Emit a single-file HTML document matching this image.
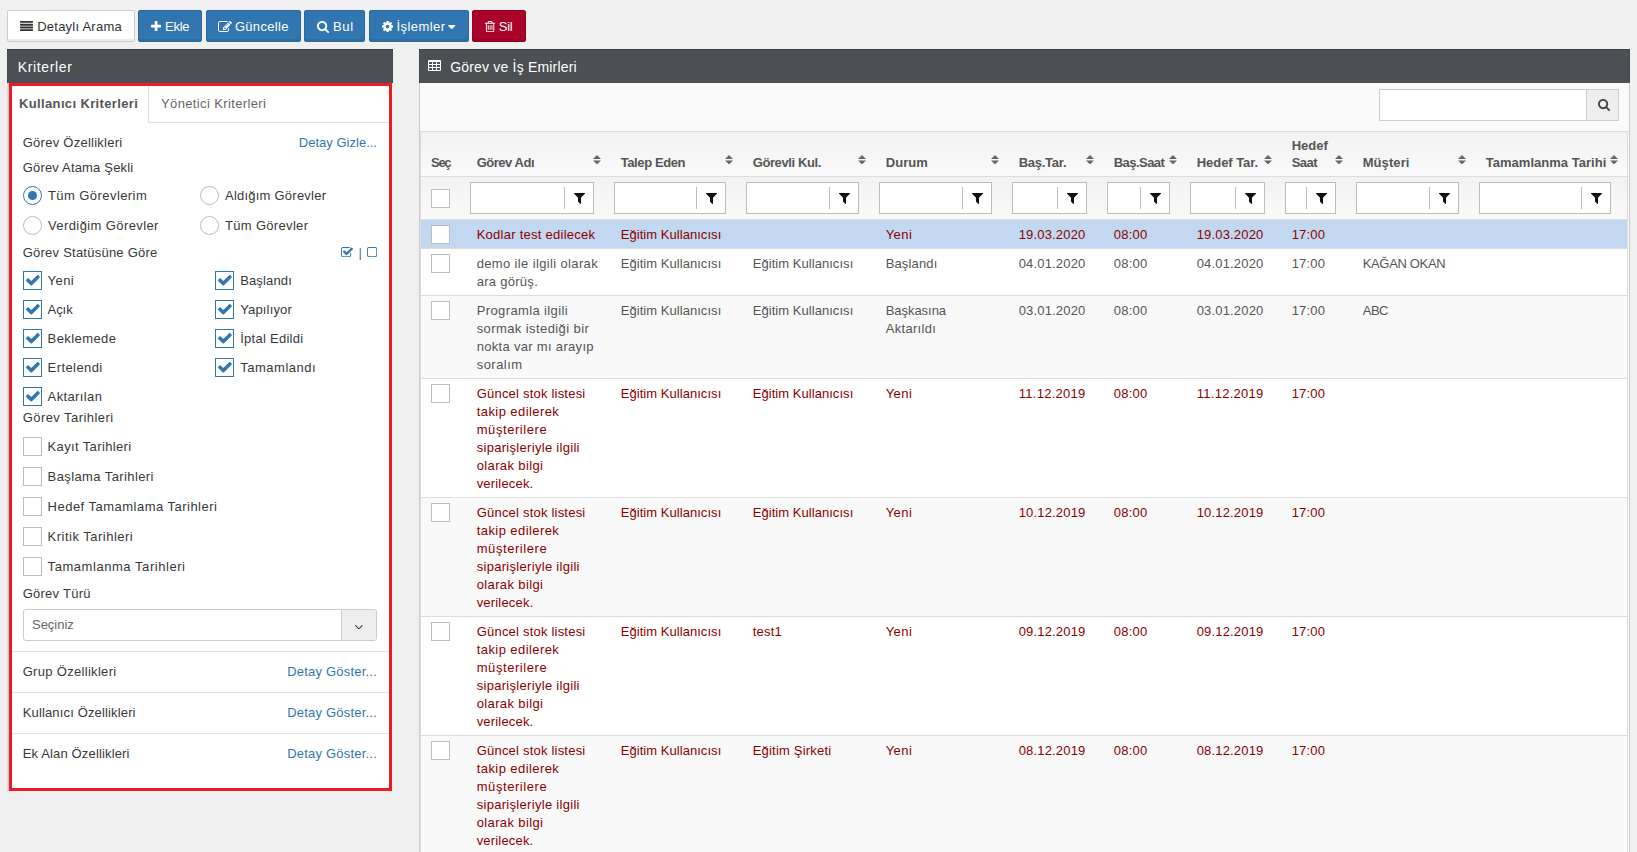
<!DOCTYPE html>
<html lang="tr">
<head>
<meta charset="utf-8">
<title>Görev ve İş Emirleri</title>
<style>
*{box-sizing:border-box;margin:0;padding:0}
html,body{width:1637px;height:852px;overflow:hidden}
body{background:#f0f0f0;font-family:"Liberation Sans",sans-serif;font-size:13px;color:#555;position:relative}
.abs{position:absolute}
.btn{position:absolute;top:10px;height:32px;box-shadow:inset 0 -2px 0 rgba(0,0,0,.07);border-radius:2px;font-size:13px;line-height:31px;color:#fff;white-space:nowrap;border:1px solid transparent}
.btn-default{background:#fff;border-color:#ccc;color:#333}
.btn-primary{background:#3276b1;border-color:#2c699d}
.btn-danger{background:#a90329;border-color:#900323}
.phead{position:absolute;top:49px;height:34px;background:#4c4f53;box-shadow:inset 0 1px 0 #3d4044,inset 1px 0 0 #45484c,inset -1px 0 0 #45484c;color:#fff;font-size:14px;line-height:34px;white-space:nowrap}
#left{position:absolute;left:7px;top:83px;width:385px;height:708px;background:#fff;border-left:1px solid #ddd;box-shadow:inset 1px 0 0 #c8c8c8}
#red{position:absolute;left:9px;top:83px;width:383px;height:708px;border:3px solid #ed1c24}
.t{position:absolute;white-space:nowrap;line-height:18px;height:18px;color:#383838}
.t.lnk{color:#3276b1}
.radio{position:absolute;width:19px;height:19px;border:1px solid #bdbdbd;border-radius:50%;background:#fff}
.radio.on{border-color:#3276b1}
.radio.on:after{content:"";position:absolute;left:4px;top:4px;width:9px;height:9px;border-radius:50%;background:#3276b1}
.cb{position:absolute;width:19px;height:19px;border:1px solid #bdbdbd;background:#fff}
.cb.on{border-color:#3276b1}
.hr{position:absolute;left:12px;width:377px;height:1px;background:#e5e5e5}
#right{position:absolute;left:419px;top:83px;width:1211px;height:780px;background:#fafafa;border:1px solid #ccc;border-top:0}
#tw{position:absolute;left:420px;top:131px;width:1208px;height:721px;overflow:hidden;border-left:1px solid #ddd;border-right:1px solid #ddd}
table{width:1208px;border-collapse:collapse;table-layout:fixed;background:#fff}
th{font-weight:700;text-align:left;vertical-align:bottom;color:#555;padding:0 0 4px 8.7px;line-height:18px;position:relative;white-space:nowrap}
th:first-child{padding-left:10px}
thead tr.h{height:45px;background:linear-gradient(#f2f2f2,#fafafa)}
thead tr.h th{border-top:1px solid #ddd;border-bottom:1px solid #ddd}
thead tr.f{height:43px;background:linear-gradient(#f2f2f2,#fafafa)}
thead tr.f th{padding:0;vertical-align:top}
.fi{position:absolute;left:2px;right:18px;top:5px;height:32px;border:1px solid #bdbdbd;background:#fff}
.fi i{position:absolute;right:28px;top:4px;bottom:4px;width:1px;background:#bdbdbd}
td{white-space:nowrap;padding:6px 0 4px 8.7px;line-height:18px;vertical-align:top;border-top:1px solid #ddd;position:relative}
tbody tr:nth-child(odd){background:#f9f9f9}
tbody tr.sel{background:#c1d8f0}
tr.red td{color:#8b0000}
.ck{position:absolute;left:10px;top:5px;width:19px;height:19px;border:1px solid #bdbdbd;background:#fff}
.up{position:relative;top:1px}
</style>
</head>
<body>
<!-- toolbar -->
<div class="btn btn-default" style="left:7px;width:127.5px"><svg class="abs" style="left:12px;top:9.7px" width="13.00" height="10.21" viewBox="0 128 1792 1408"><path fill="#333" d="M1792 1344C1792 1309 1763 1280 1728 1280H64C29 1280 0 1309 0 1344V1472C0 1507 29 1536 64 1536H1728C1763 1536 1792 1507 1792 1472ZM1792 960C1792 925 1763 896 1728 896H64C29 896 0 925 0 960V1088C0 1123 29 1152 64 1152H1728C1763 1152 1792 1123 1792 1088ZM1792 576C1792 541 1763 512 1728 512H64C29 512 0 541 0 576V704C0 739 29 768 64 768H1728C1763 768 1792 739 1792 704ZM1792 192C1792 157 1763 128 1728 128H64C29 128 0 157 0 192V320C0 355 29 384 64 384H1728C1763 384 1792 355 1792 320Z"/></svg><span class="abs" style="left:29.2px;top:0;letter-spacing:0.24px">Detaylı Arama</span></div>
<div class="btn btn-primary" style="left:138px;width:64px"><svg class="abs" style="left:12px;top:9.8px" width="10.21" height="10.21" viewBox="0 128 1408 1408"><path fill="#fff" d="M1408 736C1408 683 1365 640 1312 640H896V224C896 171 853 128 800 128H608C555 128 512 171 512 224V640H96C43 640 0 683 0 736V928C0 981 43 1024 96 1024H512V1440C512 1493 555 1536 608 1536H800C853 1536 896 1493 896 1440V1024H1312C1365 1024 1408 981 1408 928Z"/></svg><span class="abs" style="left:26.0px;top:0;letter-spacing:-0.27px">Ekle</span></div>
<div class="btn btn-primary" style="left:206px;width:95px"><svg class="abs" style="left:11.4px;top:9.7px" width="13.94" height="11.00" viewBox="0 128 1784 1408"><path fill="#fff" d="M888 1184H832V1088H736V1032L852 916L1004 1068ZM1328 464C1337 473 1336 488 1327 497L977 847C968 856 953 857 944 848C935 839 936 824 945 815L1295 465C1304 456 1319 455 1328 464ZM1408 1058C1408 1045 1400 1034 1388 1029C1376 1024 1363 1026 1353 1036L1289 1100C1283 1106 1280 1114 1280 1122V1248C1280 1336 1208 1408 1120 1408H288C200 1408 128 1336 128 1248V416C128 328 200 256 288 256H1120C1135 256 1150 258 1165 262C1176 266 1188 263 1197 254L1246 205C1254 197 1257 187 1255 176C1253 166 1246 157 1237 153C1200 136 1160 128 1120 128H288C129 128 0 257 0 416V1248C0 1407 129 1536 288 1536H1120C1279 1536 1408 1407 1408 1248ZM1312 320 640 992V1280H928L1600 608ZM1756 452C1793 415 1793 353 1756 316L1604 164C1567 127 1505 127 1468 164L1376 256L1664 544L1756 452Z"/></svg><span class="abs" style="left:27.9px;top:0;letter-spacing:0.31px">Güncelle</span></div>
<div class="btn btn-primary" style="left:304px;width:61px"><svg class="abs" style="left:12.3px;top:10px" width="12.07" height="12.07" viewBox="0 128 1664 1664"><path fill="#fff" d="M1152 832C1152 1079 951 1280 704 1280C457 1280 256 1079 256 832C256 585 457 384 704 384C951 384 1152 585 1152 832ZM1664 1664C1664 1630 1650 1597 1627 1574L1284 1231C1365 1114 1408 974 1408 832C1408 443 1093 128 704 128C315 128 0 443 0 832C0 1221 315 1536 704 1536C846 1536 986 1493 1103 1412L1446 1754C1469 1778 1502 1792 1536 1792C1606 1792 1664 1734 1664 1664Z"/></svg><span class="abs" style="left:28.1px;top:0;letter-spacing:0.6px">Bul</span></div>
<div class="btn btn-primary" style="left:369px;width:99.5px"><svg class="abs" style="left:12px;top:9.8px" width="11.14" height="11.14" viewBox="0 128 1536 1536"><path fill="#fff" d="M1024 896C1024 1037 909 1152 768 1152C627 1152 512 1037 512 896C512 755 627 640 768 640C909 640 1024 755 1024 896ZM1536 787C1536 770 1524 754 1507 751L1324 723C1314 690 1300 657 1283 625C1317 578 1354 534 1388 488C1393 481 1396 474 1396 465C1396 457 1394 449 1389 443C1347 384 1277 322 1224 273C1217 267 1208 263 1199 263C1190 263 1181 266 1175 272L1033 379C1004 364 974 352 943 342L915 158C913 141 897 128 879 128H657C639 128 625 140 621 156C605 216 599 281 592 342C561 352 530 365 501 380L363 273C355 267 346 263 337 263C303 263 168 409 144 442C139 449 135 456 135 465C135 474 139 482 145 489C182 534 218 579 252 627C236 657 223 687 213 719L27 747C12 750 0 768 0 783V1005C0 1022 12 1038 29 1041L212 1068C222 1102 236 1135 253 1167C219 1214 182 1258 148 1304C143 1311 140 1318 140 1327C140 1335 142 1343 147 1350C189 1408 259 1470 312 1518C319 1525 328 1529 337 1529C346 1529 355 1526 362 1520L503 1413C532 1428 562 1440 593 1450L621 1634C623 1651 639 1664 657 1664H879C897 1664 911 1652 915 1636C931 1576 937 1511 944 1450C975 1440 1006 1427 1035 1412L1173 1520C1181 1525 1190 1529 1199 1529C1233 1529 1368 1382 1392 1350C1398 1343 1401 1336 1401 1327C1401 1318 1397 1309 1391 1302C1354 1257 1318 1213 1284 1164C1300 1135 1312 1105 1323 1073L1508 1045C1524 1042 1536 1024 1536 1009Z"/></svg><span class="abs" style="left:26.5px;top:0;letter-spacing:0.44px">İşlemler</span><svg class="abs" style="left:78.2px;top:14.4px" width="7.43" height="4.18" viewBox="0 640 1024 576"><path fill="#fff" d="M1024 704C1024 669 995 640 960 640H64C29 640 0 669 0 704C0 721 7 737 19 749L467 1197C479 1209 495 1216 512 1216C529 1216 545 1209 557 1197L1005 749C1017 737 1024 721 1024 704Z"/></svg></div>
<div class="btn btn-danger" style="left:472px;width:54px"><svg class="abs" style="left:12px;top:9.6px" width="10.21" height="11.14" viewBox="0 128 1408 1536"><path fill="#fff" d="M512 736C512 718 498 704 480 704H416C398 704 384 718 384 736V1312C384 1330 398 1344 416 1344H480C498 1344 512 1330 512 1312ZM768 736C768 718 754 704 736 704H672C654 704 640 718 640 736V1312C640 1330 654 1344 672 1344H736C754 1344 768 1330 768 1312ZM1024 736C1024 718 1010 704 992 704H928C910 704 896 718 896 736V1312C896 1330 910 1344 928 1344H992C1010 1344 1024 1330 1024 1312ZM1152 1460C1152 1508 1125 1536 1120 1536H288C283 1536 256 1508 256 1460V512H1152V1460ZM480 384 529 267C532 263 540 257 546 256H863C868 257 877 263 880 267L928 384ZM1408 416C1408 398 1394 384 1376 384H1067L997 217C977 168 917 128 864 128H544C491 128 431 168 411 217L341 384H32C14 384 0 398 0 416V480C0 498 14 512 32 512H128V1464C128 1574 200 1664 288 1664H1120C1208 1664 1280 1570 1280 1460V512H1376C1394 512 1408 498 1408 480Z"/></svg><span class="abs" style="left:25.7px;top:0;letter-spacing:-0.23px">Sil</span></div>
<!-- left panel -->
<div class="phead" style="left:7px;width:386px"><span class="abs" style="left:10.8px;top:1px;letter-spacing:0.64px">Kriterler</span></div>
<div id="left"></div>
<div class="abs" style="left:148px;top:86px;width:1px;height:37px;background:#ddd"></div>
<div class="abs" style="left:148px;top:122px;width:241px;height:1px;background:#ddd"></div>
<div class="t " style="left:19px;top:95px;letter-spacing:0.36px;font-weight:700;color:#555">Kullanıcı Kriterleri</div><div class="t " style="left:161px;top:95px;letter-spacing:0.37px;color:#666">Yönetici Kriterleri</div><div class="t " style="left:22.7px;top:134px;letter-spacing:0.26px">Görev Özellikleri</div><div class="t lnk" style="left:0px;top:134px;letter-spacing:0.01px;left:auto;right:1260px">Detay Gizle...</div><div class="t " style="left:22.7px;top:159px;letter-spacing:0.18px">Görev Atama Şekli</div><div class="radio on" style="left:23px;top:186px"></div><div class="t " style="left:48px;top:187px;letter-spacing:0.43px">Tüm Görevlerim</div><div class="radio" style="left:200px;top:186px"></div><div class="t " style="left:225px;top:187px;letter-spacing:0.23px">Aldığım Görevler</div><div class="radio" style="left:23px;top:216px"></div><div class="t " style="left:48px;top:217px;letter-spacing:0.4px">Verdiğim Görevler</div><div class="radio" style="left:200px;top:216px"></div><div class="t " style="left:225px;top:217px;letter-spacing:0.32px">Tüm Görevler</div><div class="t " style="left:22.7px;top:244px;letter-spacing:0.24px">Görev Statüsüne Göre</div><svg class="abs" style="left:341px;top:247px" width="12.06" height="10.21" viewBox="0 128 1663 1408"><path fill="#3276b1" d="M1408 930C1408 917 1400 906 1388 901C1384 899 1380 898 1376 898C1368 898 1360 901 1353 908L1289 972C1283 978 1280 986 1280 994V1248C1280 1336 1208 1408 1120 1408H288C200 1408 128 1336 128 1248V416C128 328 200 256 288 256H1120C1135 256 1150 258 1165 262C1168 263 1171 264 1174 264C1182 264 1191 260 1197 254L1246 205C1254 197 1257 187 1255 176C1253 166 1246 157 1237 153C1200 136 1160 128 1120 128H288C129 128 0 257 0 416V1248C0 1407 129 1536 288 1536H1120C1279 1536 1408 1407 1408 1248ZM1639 441C1671 409 1671 359 1639 327L1529 217C1497 185 1447 185 1415 217L768 864L505 601C473 569 423 569 391 601L281 711C249 743 249 793 281 825L711 1255C743 1287 793 1287 825 1255L1639 441Z"/></svg><div class="t " style="left:358.6px;top:243.5px;letter-spacing:0.2px;color:#4a6f9a">|</div><svg class="abs" style="left:367px;top:246.8px" width="10.21" height="10.21" viewBox="0 128 1408 1408"><path fill="#3276b1" d="M1120 256C1208 256 1280 328 1280 416V1248C1280 1336 1208 1408 1120 1408H288C200 1408 128 1336 128 1248V416C128 328 200 256 288 256H1120ZM1408 416C1408 257 1279 128 1120 128H288C129 128 0 257 0 416V1248C0 1407 129 1536 288 1536H1120C1279 1536 1408 1407 1408 1248Z"/></svg><div class="cb on" style="left:23px;top:271px"><svg class="abs" style="left:2.2px;top:3.2px" width="13.84" height="10.61" viewBox="121 334 1550 1188"><path fill="#3276b1" d="M1671 566C1671 541 1661 516 1643 498L1507 362C1489 344 1464 334 1439 334C1414 334 1389 344 1371 362L715 1019L421 724C403 706 378 696 353 696C328 696 303 706 285 724L149 860C131 878 121 903 121 928C121 953 131 978 149 996L511 1358L647 1494C665 1512 690 1522 715 1522C740 1522 765 1512 783 1494L919 1358L1643 634C1661 616 1671 591 1671 566Z"/></svg></div><div class="t " style="left:47.6px;top:272px;letter-spacing:0.42px">Yeni</div><div class="cb on" style="left:215px;top:271px"><svg class="abs" style="left:2.2px;top:3.2px" width="13.84" height="10.61" viewBox="121 334 1550 1188"><path fill="#3276b1" d="M1671 566C1671 541 1661 516 1643 498L1507 362C1489 344 1464 334 1439 334C1414 334 1389 344 1371 362L715 1019L421 724C403 706 378 696 353 696C328 696 303 706 285 724L149 860C131 878 121 903 121 928C121 953 131 978 149 996L511 1358L647 1494C665 1512 690 1522 715 1522C740 1522 765 1512 783 1494L919 1358L1643 634C1661 616 1671 591 1671 566Z"/></svg></div><div class="t " style="left:240.2px;top:272px;letter-spacing:0.14px">Başlandı</div>
<div class="cb on" style="left:23px;top:300px"><svg class="abs" style="left:2.2px;top:3.2px" width="13.84" height="10.61" viewBox="121 334 1550 1188"><path fill="#3276b1" d="M1671 566C1671 541 1661 516 1643 498L1507 362C1489 344 1464 334 1439 334C1414 334 1389 344 1371 362L715 1019L421 724C403 706 378 696 353 696C328 696 303 706 285 724L149 860C131 878 121 903 121 928C121 953 131 978 149 996L511 1358L647 1494C665 1512 690 1522 715 1522C740 1522 765 1512 783 1494L919 1358L1643 634C1661 616 1671 591 1671 566Z"/></svg></div><div class="t " style="left:47.6px;top:301px;letter-spacing:-0.07px">Açık</div><div class="cb on" style="left:215px;top:300px"><svg class="abs" style="left:2.2px;top:3.2px" width="13.84" height="10.61" viewBox="121 334 1550 1188"><path fill="#3276b1" d="M1671 566C1671 541 1661 516 1643 498L1507 362C1489 344 1464 334 1439 334C1414 334 1389 344 1371 362L715 1019L421 724C403 706 378 696 353 696C328 696 303 706 285 724L149 860C131 878 121 903 121 928C121 953 131 978 149 996L511 1358L647 1494C665 1512 690 1522 715 1522C740 1522 765 1512 783 1494L919 1358L1643 634C1661 616 1671 591 1671 566Z"/></svg></div><div class="t " style="left:240.2px;top:301px;letter-spacing:0.16px">Yapılıyor</div>
<div class="cb on" style="left:23px;top:329px"><svg class="abs" style="left:2.2px;top:3.2px" width="13.84" height="10.61" viewBox="121 334 1550 1188"><path fill="#3276b1" d="M1671 566C1671 541 1661 516 1643 498L1507 362C1489 344 1464 334 1439 334C1414 334 1389 344 1371 362L715 1019L421 724C403 706 378 696 353 696C328 696 303 706 285 724L149 860C131 878 121 903 121 928C121 953 131 978 149 996L511 1358L647 1494C665 1512 690 1522 715 1522C740 1522 765 1512 783 1494L919 1358L1643 634C1661 616 1671 591 1671 566Z"/></svg></div><div class="t " style="left:47.6px;top:330px;letter-spacing:0.41px">Beklemede</div><div class="cb on" style="left:215px;top:329px"><svg class="abs" style="left:2.2px;top:3.2px" width="13.84" height="10.61" viewBox="121 334 1550 1188"><path fill="#3276b1" d="M1671 566C1671 541 1661 516 1643 498L1507 362C1489 344 1464 334 1439 334C1414 334 1389 344 1371 362L715 1019L421 724C403 706 378 696 353 696C328 696 303 706 285 724L149 860C131 878 121 903 121 928C121 953 131 978 149 996L511 1358L647 1494C665 1512 690 1522 715 1522C740 1522 765 1512 783 1494L919 1358L1643 634C1661 616 1671 591 1671 566Z"/></svg></div><div class="t " style="left:240.2px;top:330px;letter-spacing:0.27px">İptal Edildi</div>
<div class="cb on" style="left:23px;top:358px"><svg class="abs" style="left:2.2px;top:3.2px" width="13.84" height="10.61" viewBox="121 334 1550 1188"><path fill="#3276b1" d="M1671 566C1671 541 1661 516 1643 498L1507 362C1489 344 1464 334 1439 334C1414 334 1389 344 1371 362L715 1019L421 724C403 706 378 696 353 696C328 696 303 706 285 724L149 860C131 878 121 903 121 928C121 953 131 978 149 996L511 1358L647 1494C665 1512 690 1522 715 1522C740 1522 765 1512 783 1494L919 1358L1643 634C1661 616 1671 591 1671 566Z"/></svg></div><div class="t " style="left:47.6px;top:359px;letter-spacing:0.42px">Ertelendi</div><div class="cb on" style="left:215px;top:358px"><svg class="abs" style="left:2.2px;top:3.2px" width="13.84" height="10.61" viewBox="121 334 1550 1188"><path fill="#3276b1" d="M1671 566C1671 541 1661 516 1643 498L1507 362C1489 344 1464 334 1439 334C1414 334 1389 344 1371 362L715 1019L421 724C403 706 378 696 353 696C328 696 303 706 285 724L149 860C131 878 121 903 121 928C121 953 131 978 149 996L511 1358L647 1494C665 1512 690 1522 715 1522C740 1522 765 1512 783 1494L919 1358L1643 634C1661 616 1671 591 1671 566Z"/></svg></div><div class="t " style="left:240.2px;top:359px;letter-spacing:0.52px">Tamamlandı</div>
<div class="cb on" style="left:23px;top:387px"><svg class="abs" style="left:2.2px;top:3.2px" width="13.84" height="10.61" viewBox="121 334 1550 1188"><path fill="#3276b1" d="M1671 566C1671 541 1661 516 1643 498L1507 362C1489 344 1464 334 1439 334C1414 334 1389 344 1371 362L715 1019L421 724C403 706 378 696 353 696C328 696 303 706 285 724L149 860C131 878 121 903 121 928C121 953 131 978 149 996L511 1358L647 1494C665 1512 690 1522 715 1522C740 1522 765 1512 783 1494L919 1358L1643 634C1661 616 1671 591 1671 566Z"/></svg></div><div class="t " style="left:47.6px;top:388px;letter-spacing:0.37px">Aktarılan</div>
<div class="t " style="left:22.7px;top:409px;letter-spacing:0.44px">Görev Tarihleri</div><div class="cb" style="left:23px;top:437px"></div><div class="t " style="left:47.6px;top:438px;letter-spacing:0.36px">Kayıt Tarihleri</div>
<div class="cb" style="left:23px;top:467px"></div><div class="t " style="left:47.6px;top:468px;letter-spacing:0.4px">Başlama Tarihleri</div>
<div class="cb" style="left:23px;top:497px"></div><div class="t " style="left:47.6px;top:498px;letter-spacing:0.48px">Hedef Tamamlama Tarihleri</div>
<div class="cb" style="left:23px;top:527px"></div><div class="t " style="left:47.6px;top:528px;letter-spacing:0.49px">Kritik Tarihleri</div>
<div class="cb" style="left:23px;top:557px"></div><div class="t " style="left:47.6px;top:558px;letter-spacing:0.55px">Tamamlanma Tarihleri</div>
<div class="t " style="left:22.7px;top:585px;letter-spacing:0.25px">Görev Türü</div><div class="abs" style="left:23px;top:609px;width:354px;height:32px;border:1px solid #ccc;border-radius:3px;background:#fff"></div>
<div class="abs" style="left:341px;top:610px;width:35px;height:30px;border-left:1px solid #ccc;background:#eee;border-radius:0 2px 2px 0"></div>
<svg class="abs" style="left:355.3px;top:624.5px" width="7.80" height="4.55" viewBox="77 653 998 582"><path fill="#333" d="M1075 736C1075 728 1071 719 1065 713L1015 663C1009 657 1000 653 992 653C984 653 975 657 969 663L576 1056L183 663C177 657 168 653 160 653C151 653 143 657 137 663L87 713C81 719 77 728 77 736C77 744 81 753 87 759L553 1225C559 1231 568 1235 576 1235C584 1235 593 1231 599 1225L1065 759C1071 753 1075 744 1075 736Z"/></svg><div class="t " style="left:32px;top:616px;letter-spacing:-0.02px;color:#666">Seçiniz</div><div class="hr" style="top:651px"></div>
<div class="t " style="left:22.7px;top:662.6px;letter-spacing:0.31px">Grup Özellikleri</div><div class="t lnk" style="left:0px;top:662.6px;letter-spacing:0.21px;left:auto;right:1260px">Detay Göster...</div>
<div class="hr" style="top:692px"></div>
<div class="t " style="left:22.7px;top:703.6px;letter-spacing:0.15px">Kullanıcı Özellikleri</div><div class="t lnk" style="left:0px;top:703.6px;letter-spacing:0.21px;left:auto;right:1260px">Detay Göster...</div>
<div class="hr" style="top:733px"></div>
<div class="t " style="left:22.7px;top:744.6px;letter-spacing:0.15px">Ek Alan Özellikleri</div><div class="t lnk" style="left:0px;top:744.6px;letter-spacing:0.21px;left:auto;right:1260px">Detay Göster...</div>
<div id="red"></div>
<!-- right panel -->
<div class="phead" style="left:419px;width:1211px"><svg class="abs" style="left:9px;top:11px" width="13.00" height="11.00" viewBox="0 128 1664 1408"><path fill="#fff" d="M512 1376C512 1394 498 1408 480 1408H160C142 1408 128 1394 128 1376V1184C128 1166 142 1152 160 1152H480C498 1152 512 1166 512 1184V1376ZM512 992C512 1010 498 1024 480 1024H160C142 1024 128 1010 128 992V800C128 782 142 768 160 768H480C498 768 512 782 512 800V992ZM1024 1376C1024 1394 1010 1408 992 1408H672C654 1408 640 1394 640 1376V1184C640 1166 654 1152 672 1152H992C1010 1152 1024 1166 1024 1184V1376ZM512 608C512 626 498 640 480 640H160C142 640 128 626 128 608V416C128 398 142 384 160 384H480C498 384 512 398 512 416V608ZM1024 992C1024 1010 1010 1024 992 1024H672C654 1024 640 1010 640 992V800C640 782 654 768 672 768H992C1010 768 1024 782 1024 800V992ZM1536 1376C1536 1394 1522 1408 1504 1408H1184C1166 1408 1152 1394 1152 1376V1184C1152 1166 1166 1152 1184 1152H1504C1522 1152 1536 1166 1536 1184V1376ZM1024 608C1024 626 1010 640 992 640H672C654 640 640 626 640 608V416C640 398 654 384 672 384H992C1010 384 1024 398 1024 416V608ZM1536 992C1536 1010 1522 1024 1504 1024H1184C1166 1024 1152 1010 1152 992V800C1152 782 1166 768 1184 768H1504C1522 768 1536 782 1536 800V992ZM1536 608C1536 626 1522 640 1504 640H1184C1166 640 1152 626 1152 608V416C1152 398 1166 384 1184 384H1504C1522 384 1536 398 1536 416V608ZM1664 288C1664 200 1592 128 1504 128H160C72 128 0 200 0 288V1376C0 1464 72 1536 160 1536H1504C1592 1536 1664 1464 1664 1376Z"/></svg><span class="abs" style="left:31.2px;top:1px;letter-spacing:0.19px">Görev ve İş Emirleri</span></div>
<div id="right"></div>
<div class="abs" style="left:1379px;top:89px;width:240px;height:32px;border:1px solid #ccc;background:#fff"></div>
<div class="abs" style="left:1586px;top:90px;width:32px;height:30px;border-left:1px solid #ccc;background:#eee"></div>
<svg class="abs" style="left:1597.7px;top:99px" width="12.07" height="12.07" viewBox="0 128 1664 1664"><path fill="#444" d="M1152 832C1152 1079 951 1280 704 1280C457 1280 256 1079 256 832C256 585 457 384 704 384C951 384 1152 585 1152 832ZM1664 1664C1664 1630 1650 1597 1627 1574L1284 1231C1365 1114 1408 974 1408 832C1408 443 1093 128 704 128C315 128 0 443 0 832C0 1221 315 1536 704 1536C846 1536 986 1493 1103 1412L1446 1754C1469 1778 1502 1792 1536 1792C1606 1792 1664 1734 1664 1664Z"/></svg><div id="tw"><table>
<colgroup><col style="width:47px"><col style="width:144px"><col style="width:132px"><col style="width:133px"><col style="width:133px"><col style="width:95px"><col style="width:83px"><col style="width:95px"><col style="width:71px"><col style="width:123px"><col style="width:152px"></colgroup>
<thead>
<tr class="h"><th><span style="letter-spacing:-1.27px">Seç</span></th>
<th><span style="letter-spacing:-0.48px">Görev Adı</span><svg class="abs" style="right:11.4px;bottom:11.6px" width="8" height="9.4" viewBox="0 0 8 9.4"><path fill="#666" d="M0 4L4 0L8 4ZM0 5.4H8L4 9.4Z"/></svg></th>
<th><span style="letter-spacing:-0.39px">Talep Eden</span><svg class="abs" style="right:11.4px;bottom:11.6px" width="8" height="9.4" viewBox="0 0 8 9.4"><path fill="#666" d="M0 4L4 0L8 4ZM0 5.4H8L4 9.4Z"/></svg></th>
<th><span style="letter-spacing:-0.4px">Görevli Kul.</span><svg class="abs" style="right:11.4px;bottom:11.6px" width="8" height="9.4" viewBox="0 0 8 9.4"><path fill="#666" d="M0 4L4 0L8 4ZM0 5.4H8L4 9.4Z"/></svg></th>
<th><span style="letter-spacing:0.08px">Durum</span><svg class="abs" style="right:11.4px;bottom:11.6px" width="8" height="9.4" viewBox="0 0 8 9.4"><path fill="#666" d="M0 4L4 0L8 4ZM0 5.4H8L4 9.4Z"/></svg></th>
<th><span style="letter-spacing:-0.26px">Baş.Tar.</span><svg class="abs" style="right:11.4px;bottom:11.6px" width="8" height="9.4" viewBox="0 0 8 9.4"><path fill="#666" d="M0 4L4 0L8 4ZM0 5.4H8L4 9.4Z"/></svg></th>
<th><span style="letter-spacing:-0.53px">Baş.Saat</span><svg class="abs" style="right:11.4px;bottom:11.6px" width="8" height="9.4" viewBox="0 0 8 9.4"><path fill="#666" d="M0 4L4 0L8 4ZM0 5.4H8L4 9.4Z"/></svg></th>
<th><span style="letter-spacing:-0.04px">Hedef Tar.</span><svg class="abs" style="right:11.4px;bottom:11.6px" width="8" height="9.4" viewBox="0 0 8 9.4"><path fill="#666" d="M0 4L4 0L8 4ZM0 5.4H8L4 9.4Z"/></svg></th>
<th><span class="up"><span style="letter-spacing:0.02px">Hedef</span></span><br><span style="letter-spacing:-0.49px">Saat</span><svg class="abs" style="right:11.4px;bottom:11.6px" width="8" height="9.4" viewBox="0 0 8 9.4"><path fill="#666" d="M0 4L4 0L8 4ZM0 5.4H8L4 9.4Z"/></svg></th>
<th><span style="letter-spacing:0.08px">Müşteri</span><svg class="abs" style="right:11.4px;bottom:11.6px" width="8" height="9.4" viewBox="0 0 8 9.4"><path fill="#666" d="M0 4L4 0L8 4ZM0 5.4H8L4 9.4Z"/></svg></th>
<th><span style="letter-spacing:0.03px">Tamamlanma Tarihi</span><svg class="abs" style="right:11.4px;bottom:11.6px" width="8" height="9.4" viewBox="0 0 8 9.4"><path fill="#666" d="M0 4L4 0L8 4ZM0 5.4H8L4 9.4Z"/></svg></th>
</tr>
<tr class="f"><th><span class="ck" style="top:12px"></span></th>
<th><div class="fi"><i></i><svg class="abs" style="left:0px;top:0px;left:auto;right:7.9px;top:9.7px" width="11.00" height="11.00" viewBox="0 256 1408 1408"><path fill="#111" d="M1403 295C1393 272 1370 256 1344 256H64C38 256 15 272 5 295C-5 319 0 347 19 365L512 858V1344C512 1361 519 1377 531 1389L787 1645C799 1658 815 1664 832 1664C840 1664 849 1662 857 1659C880 1649 896 1626 896 1600V858L1389 365C1408 347 1413 319 1403 295Z"/></svg></div></th>
<th><div class="fi"><i></i><svg class="abs" style="left:0px;top:0px;left:auto;right:7.9px;top:9.7px" width="11.00" height="11.00" viewBox="0 256 1408 1408"><path fill="#111" d="M1403 295C1393 272 1370 256 1344 256H64C38 256 15 272 5 295C-5 319 0 347 19 365L512 858V1344C512 1361 519 1377 531 1389L787 1645C799 1658 815 1664 832 1664C840 1664 849 1662 857 1659C880 1649 896 1626 896 1600V858L1389 365C1408 347 1413 319 1403 295Z"/></svg></div></th>
<th><div class="fi"><i></i><svg class="abs" style="left:0px;top:0px;left:auto;right:7.9px;top:9.7px" width="11.00" height="11.00" viewBox="0 256 1408 1408"><path fill="#111" d="M1403 295C1393 272 1370 256 1344 256H64C38 256 15 272 5 295C-5 319 0 347 19 365L512 858V1344C512 1361 519 1377 531 1389L787 1645C799 1658 815 1664 832 1664C840 1664 849 1662 857 1659C880 1649 896 1626 896 1600V858L1389 365C1408 347 1413 319 1403 295Z"/></svg></div></th>
<th><div class="fi"><i></i><svg class="abs" style="left:0px;top:0px;left:auto;right:7.9px;top:9.7px" width="11.00" height="11.00" viewBox="0 256 1408 1408"><path fill="#111" d="M1403 295C1393 272 1370 256 1344 256H64C38 256 15 272 5 295C-5 319 0 347 19 365L512 858V1344C512 1361 519 1377 531 1389L787 1645C799 1658 815 1664 832 1664C840 1664 849 1662 857 1659C880 1649 896 1626 896 1600V858L1389 365C1408 347 1413 319 1403 295Z"/></svg></div></th>
<th><div class="fi"><i></i><svg class="abs" style="left:0px;top:0px;left:auto;right:7.9px;top:9.7px" width="11.00" height="11.00" viewBox="0 256 1408 1408"><path fill="#111" d="M1403 295C1393 272 1370 256 1344 256H64C38 256 15 272 5 295C-5 319 0 347 19 365L512 858V1344C512 1361 519 1377 531 1389L787 1645C799 1658 815 1664 832 1664C840 1664 849 1662 857 1659C880 1649 896 1626 896 1600V858L1389 365C1408 347 1413 319 1403 295Z"/></svg></div></th>
<th><div class="fi"><i></i><svg class="abs" style="left:0px;top:0px;left:auto;right:7.9px;top:9.7px" width="11.00" height="11.00" viewBox="0 256 1408 1408"><path fill="#111" d="M1403 295C1393 272 1370 256 1344 256H64C38 256 15 272 5 295C-5 319 0 347 19 365L512 858V1344C512 1361 519 1377 531 1389L787 1645C799 1658 815 1664 832 1664C840 1664 849 1662 857 1659C880 1649 896 1626 896 1600V858L1389 365C1408 347 1413 319 1403 295Z"/></svg></div></th>
<th><div class="fi"><i></i><svg class="abs" style="left:0px;top:0px;left:auto;right:7.9px;top:9.7px" width="11.00" height="11.00" viewBox="0 256 1408 1408"><path fill="#111" d="M1403 295C1393 272 1370 256 1344 256H64C38 256 15 272 5 295C-5 319 0 347 19 365L512 858V1344C512 1361 519 1377 531 1389L787 1645C799 1658 815 1664 832 1664C840 1664 849 1662 857 1659C880 1649 896 1626 896 1600V858L1389 365C1408 347 1413 319 1403 295Z"/></svg></div></th>
<th><div class="fi"><i></i><svg class="abs" style="left:0px;top:0px;left:auto;right:7.9px;top:9.7px" width="11.00" height="11.00" viewBox="0 256 1408 1408"><path fill="#111" d="M1403 295C1393 272 1370 256 1344 256H64C38 256 15 272 5 295C-5 319 0 347 19 365L512 858V1344C512 1361 519 1377 531 1389L787 1645C799 1658 815 1664 832 1664C840 1664 849 1662 857 1659C880 1649 896 1626 896 1600V858L1389 365C1408 347 1413 319 1403 295Z"/></svg></div></th>
<th><div class="fi"><i></i><svg class="abs" style="left:0px;top:0px;left:auto;right:7.9px;top:9.7px" width="11.00" height="11.00" viewBox="0 256 1408 1408"><path fill="#111" d="M1403 295C1393 272 1370 256 1344 256H64C38 256 15 272 5 295C-5 319 0 347 19 365L512 858V1344C512 1361 519 1377 531 1389L787 1645C799 1658 815 1664 832 1664C840 1664 849 1662 857 1659C880 1649 896 1626 896 1600V858L1389 365C1408 347 1413 319 1403 295Z"/></svg></div></th>
<th><div class="fi"><i></i><svg class="abs" style="left:0px;top:0px;left:auto;right:7.9px;top:9.7px" width="11.00" height="11.00" viewBox="0 256 1408 1408"><path fill="#111" d="M1403 295C1393 272 1370 256 1344 256H64C38 256 15 272 5 295C-5 319 0 347 19 365L512 858V1344C512 1361 519 1377 531 1389L787 1645C799 1658 815 1664 832 1664C840 1664 849 1662 857 1659C880 1649 896 1626 896 1600V858L1389 365C1408 347 1413 319 1403 295Z"/></svg></div></th>
</tr>
</thead>
<tbody>
<tr class="sel red"><td><span class="ck"></span></td><td><span style="letter-spacing:0.26px">Kodlar test edilecek</span></td><td><span style="letter-spacing:0.05px">Eğitim Kullanıcısı</span></td><td></td><td><span style="letter-spacing:0.42px">Yeni</span></td><td><span style="letter-spacing:0.17px">19.03.2020</span></td><td><span style="letter-spacing:0.24px">08:00</span></td><td><span style="letter-spacing:0.17px">19.03.2020</span></td><td><span style="letter-spacing:0.19px">17:00</span></td><td></td><td></td></tr>
<tr class=""><td><span class="ck"></span></td><td><span style="letter-spacing:0.36px">demo ile ilgili olarak</span><br><span style="letter-spacing:0.28px">ara görüş.</span></td><td><span style="letter-spacing:0.05px">Eğitim Kullanıcısı</span></td><td><span style="letter-spacing:0.05px">Eğitim Kullanıcısı</span></td><td><span style="letter-spacing:0.14px">Başlandı</span></td><td><span style="letter-spacing:0.17px">04.01.2020</span></td><td><span style="letter-spacing:0.24px">08:00</span></td><td><span style="letter-spacing:0.17px">04.01.2020</span></td><td><span style="letter-spacing:0.19px">17:00</span></td><td><span style="letter-spacing:-0.33px">KAĞAN OKAN</span></td><td></td></tr>
<tr class=""><td><span class="ck"></span></td><td><span style="letter-spacing:0.38px">Programla ilgili</span><br><span style="letter-spacing:0.41px">sormak istediği bir</span><br><span style="letter-spacing:0.31px">nokta var mı arayıp</span><br><span style="letter-spacing:0.46px">soralım</span></td><td><span style="letter-spacing:0.05px">Eğitim Kullanıcısı</span></td><td><span style="letter-spacing:0.05px">Eğitim Kullanıcısı</span></td><td><span style="letter-spacing:-0.04px">Başkasına</span><br><span style="letter-spacing:0.31px">Aktarıldı</span></td><td><span style="letter-spacing:0.17px">03.01.2020</span></td><td><span style="letter-spacing:0.24px">08:00</span></td><td><span style="letter-spacing:0.17px">03.01.2020</span></td><td><span style="letter-spacing:0.19px">17:00</span></td><td><span style="letter-spacing:-0.47px">ABC</span></td><td></td></tr>
<tr class="red"><td><span class="ck"></span></td><td><span style="letter-spacing:0.21px">Güncel stok listesi</span><br><span style="letter-spacing:0.43px">takip edilerek</span><br><span style="letter-spacing:0.57px">müşterilere</span><br><span style="letter-spacing:0.3px">siparişleriyle ilgili</span><br><span style="letter-spacing:0.37px">olarak bilgi</span><br><span style="letter-spacing:0.18px">verilecek.</span></td><td><span style="letter-spacing:0.05px">Eğitim Kullanıcısı</span></td><td><span style="letter-spacing:0.05px">Eğitim Kullanıcısı</span></td><td><span style="letter-spacing:0.42px">Yeni</span></td><td><span style="letter-spacing:0.28px">11.12.2019</span></td><td><span style="letter-spacing:0.24px">08:00</span></td><td><span style="letter-spacing:0.28px">11.12.2019</span></td><td><span style="letter-spacing:0.19px">17:00</span></td><td></td><td></td></tr>
<tr class="red"><td><span class="ck"></span></td><td><span style="letter-spacing:0.21px">Güncel stok listesi</span><br><span style="letter-spacing:0.43px">takip edilerek</span><br><span style="letter-spacing:0.57px">müşterilere</span><br><span style="letter-spacing:0.3px">siparişleriyle ilgili</span><br><span style="letter-spacing:0.37px">olarak bilgi</span><br><span style="letter-spacing:0.18px">verilecek.</span></td><td><span style="letter-spacing:0.05px">Eğitim Kullanıcısı</span></td><td><span style="letter-spacing:0.05px">Eğitim Kullanıcısı</span></td><td><span style="letter-spacing:0.42px">Yeni</span></td><td><span style="letter-spacing:0.17px">10.12.2019</span></td><td><span style="letter-spacing:0.24px">08:00</span></td><td><span style="letter-spacing:0.17px">10.12.2019</span></td><td><span style="letter-spacing:0.19px">17:00</span></td><td></td><td></td></tr>
<tr class="red"><td><span class="ck"></span></td><td><span style="letter-spacing:0.21px">Güncel stok listesi</span><br><span style="letter-spacing:0.43px">takip edilerek</span><br><span style="letter-spacing:0.57px">müşterilere</span><br><span style="letter-spacing:0.3px">siparişleriyle ilgili</span><br><span style="letter-spacing:0.37px">olarak bilgi</span><br><span style="letter-spacing:0.18px">verilecek.</span></td><td><span style="letter-spacing:0.05px">Eğitim Kullanıcısı</span></td><td><span style="letter-spacing:0.2px">test1</span></td><td><span style="letter-spacing:0.42px">Yeni</span></td><td><span style="letter-spacing:0.17px">09.12.2019</span></td><td><span style="letter-spacing:0.24px">08:00</span></td><td><span style="letter-spacing:0.17px">09.12.2019</span></td><td><span style="letter-spacing:0.19px">17:00</span></td><td></td><td></td></tr>
<tr class="red"><td><span class="ck"></span></td><td><span style="letter-spacing:0.21px">Güncel stok listesi</span><br><span style="letter-spacing:0.43px">takip edilerek</span><br><span style="letter-spacing:0.57px">müşterilere</span><br><span style="letter-spacing:0.3px">siparişleriyle ilgili</span><br><span style="letter-spacing:0.37px">olarak bilgi</span><br><span style="letter-spacing:0.18px">verilecek.</span></td><td><span style="letter-spacing:0.05px">Eğitim Kullanıcısı</span></td><td><span style="letter-spacing:0.2px">Eğitim Şirketi</span></td><td><span style="letter-spacing:0.42px">Yeni</span></td><td><span style="letter-spacing:0.17px">08.12.2019</span></td><td><span style="letter-spacing:0.24px">08:00</span></td><td><span style="letter-spacing:0.17px">08.12.2019</span></td><td><span style="letter-spacing:0.19px">17:00</span></td><td></td><td></td></tr>
</tbody>
</table></div>
</body>
</html>
